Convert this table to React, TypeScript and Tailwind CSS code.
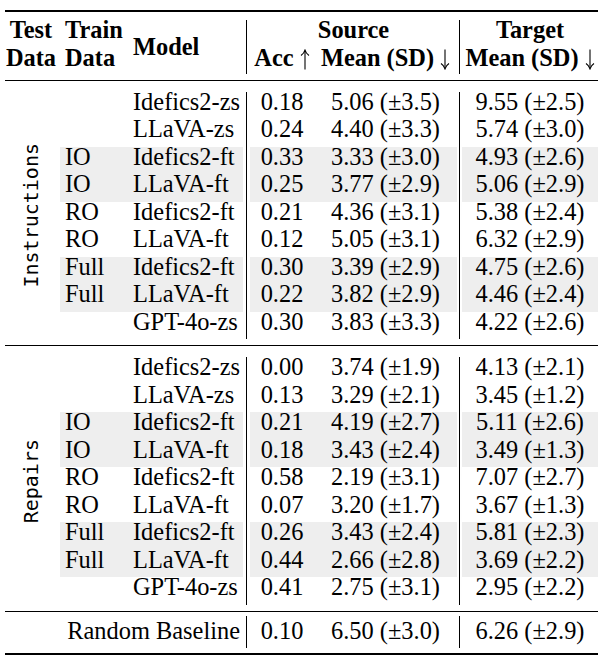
type Row = {
  train?: string;
  model: string;
  acc: string;
  mean: string;
  target: string;
  shaded?: boolean;
};

const instructions: Row[] = [
  { model: "Idefics2-zs", acc: "0.18", mean: "5.06 (±3.5)", target: "9.55 (±2.5)" },
  { model: "LLaVA-zs", acc: "0.24", mean: "4.40 (±3.3)", target: "5.74 (±3.0)" },
  { train: "IO", model: "Idefics2-ft", acc: "0.33", mean: "3.33 (±3.0)", target: "4.93 (±2.6)", shaded: true },
  { train: "IO", model: "LLaVA-ft", acc: "0.25", mean: "3.77 (±2.9)", target: "5.06 (±2.9)", shaded: true },
  { train: "RO", model: "Idefics2-ft", acc: "0.21", mean: "4.36 (±3.1)", target: "5.38 (±2.4)" },
  { train: "RO", model: "LLaVA-ft", acc: "0.12", mean: "5.05 (±3.1)", target: "6.32 (±2.9)" },
  { train: "Full", model: "Idefics2-ft", acc: "0.30", mean: "3.39 (±2.9)", target: "4.75 (±2.6)", shaded: true },
  { train: "Full", model: "LLaVA-ft", acc: "0.22", mean: "3.82 (±2.9)", target: "4.46 (±2.4)", shaded: true },
  { model: "GPT-4o-zs", acc: "0.30", mean: "3.83 (±3.3)", target: "4.22 (±2.6)" },
];

const repairs: Row[] = [
  { model: "Idefics2-zs", acc: "0.00", mean: "3.74 (±1.9)", target: "4.13 (±2.1)" },
  { model: "LLaVA-zs", acc: "0.13", mean: "3.29 (±2.1)", target: "3.45 (±1.2)" },
  { train: "IO", model: "Idefics2-ft", acc: "0.21", mean: "4.19 (±2.7)", target: "5.11 (±2.6)", shaded: true },
  { train: "IO", model: "LLaVA-ft", acc: "0.18", mean: "3.43 (±2.4)", target: "3.49 (±1.3)", shaded: true },
  { train: "RO", model: "Idefics2-ft", acc: "0.58", mean: "2.19 (±3.1)", target: "7.07 (±2.7)" },
  { train: "RO", model: "LLaVA-ft", acc: "0.07", mean: "3.20 (±1.7)", target: "3.67 (±1.3)" },
  { train: "Full", model: "Idefics2-ft", acc: "0.26", mean: "3.43 (±2.4)", target: "5.81 (±2.3)", shaded: true },
  { train: "Full", model: "LLaVA-ft", acc: "0.44", mean: "2.66 (±2.8)", target: "3.69 (±2.2)", shaded: true },
  { model: "GPT-4o-zs", acc: "0.41", mean: "2.75 (±3.1)", target: "2.95 (±2.2)" },
];

// thin math-style arrows
function UpArrow() {
  return (
    <svg width="10" height="21" viewBox="0 0 10 21" className="inline-block align-[-4px]">
      <path d="M5 20.5V1.5" stroke="black" strokeWidth="1.1" fill="none" />
      <path d="M1 6.5C3 5.2 4.3 3.6 5 1.2C5.7 3.6 7 5.2 9 6.5" stroke="black" strokeWidth="1.1" fill="none" />
    </svg>
  );
}

function DownArrow() {
  return (
    <svg width="10" height="21" viewBox="0 0 10 21" className="inline-block align-[-4px]">
      <path d="M5 0.5V19.5" stroke="black" strokeWidth="1.1" fill="none" />
      <path d="M1 14.5C3 15.8 4.3 17.4 5 19.8C5.7 17.4 7 15.8 9 14.5" stroke="black" strokeWidth="1.1" fill="none" />
    </svg>
  );
}

// vertical rule between column groups, left (wide) and right (narrow)
function SepWide() {
  return (
    <div className="w-[7px] flex justify-center bg-white">
      <div className="w-px bg-black" />
    </div>
  );
}

function SepNarrow() {
  return (
    <div className="w-[5px] flex justify-center bg-white">
      <div className="w-px bg-black" />
    </div>
  );
}

function DataRow({ row }: { row: Row }) {
  const bg = row.shaded ? "bg-[#eeeeee]" : "bg-white";
  return (
    <div className="flex h-[27.5px] leading-[20.5px] whitespace-nowrap">
      <div className={`w-[67px] pl-[5px] ${bg}`}>{row.train}</div>
      <div className={`w-[116px] pl-[6px] ${bg}`}>{row.model}</div>
      <SepWide />
      <div className={`w-[64px] text-center ${bg}`}>{row.acc}</div>
      <div className={`w-[143px] text-center ${bg}`}>{row.mean}</div>
      <SepNarrow />
      <div className={`w-[136px] text-center ${bg}`}>{row.target}</div>
    </div>
  );
}

function Section({ label, rows }: { label: string; rows: Row[] }) {
  return (
    <div className="flex">
      <div className="w-[55px] flex items-center justify-center pr-[3px]">
        <span className="[writing-mode:vertical-rl] rotate-180 font-['DejaVu_Sans_Mono',monospace] text-[20px] leading-none">
          {label}
        </span>
      </div>
      <div>
        {rows.map((r, i) => (
          <DataRow key={i} row={r} />
        ))}
      </div>
    </div>
  );
}

export default function App() {
  return (
    <div className="w-[603px] h-[656px] bg-white text-black font-['Liberation_Serif','Times_New_Roman',serif] text-[24.4px]">
      <div className="ml-[5px] w-[593px] pt-[10px]">
        <div className="h-[2px] bg-black" />

        {/* Header */}
        <div className="flex h-[54px] mt-[8px] font-bold whitespace-nowrap">
          <div className="w-[55px] pr-[3px] text-center leading-[28px] -mt-[4px]">
            <div>Test</div>
            <div>Data</div>
          </div>
          <div className="w-[67px] pl-[5px] leading-[28px] -mt-[4px]">
            <div>Train</div>
            <div>Data</div>
          </div>
          <div className="w-[116px] pl-[6px] leading-[28px] self-center">Model</div>
          <SepWide />
          <div className="w-[207px] leading-[28px] -mt-[4px]">
            <div className="text-center">Source</div>
            <div className="flex">
              <div className="w-[64px] text-center">
                Acc <UpArrow />
              </div>
              <div className="w-[143px] text-center">
                Mean (SD) <DownArrow />
              </div>
            </div>
          </div>
          <SepNarrow />
          <div className="w-[136px] leading-[28px] -mt-[4px] text-center">
            <div>Target</div>
            <div>
              Mean (SD) <DownArrow />
            </div>
          </div>
        </div>

        <div className="h-px mt-[6px] bg-black" />

        <div className="mt-[10.5px]">
          <Section label="Instructions" rows={instructions} />
        </div>

        <div className="h-px mt-[6px] bg-black" />

        <div className="mt-[11px]">
          <Section label="Repairs" rows={repairs} />
        </div>

        <div className="h-px mt-[6.5px] bg-black" />

        {/* Random baseline */}
        <div className="flex h-[32px] mt-[4px] leading-[20.5px] whitespace-nowrap">
          <div className="w-[238px] pr-[3px] pt-[4.5px] text-right">Random Baseline</div>
          <SepWide />
          <div className="w-[64px] pt-[4.5px] text-center">0.10</div>
          <div className="w-[143px] pt-[4.5px] text-center">6.50 (±3.0)</div>
          <SepNarrow />
          <div className="w-[136px] pt-[4.5px] text-center">6.26 (±2.9)</div>
        </div>

        <div className="h-[2px] mt-[5px] bg-black" />
      </div>
    </div>
  );
}
